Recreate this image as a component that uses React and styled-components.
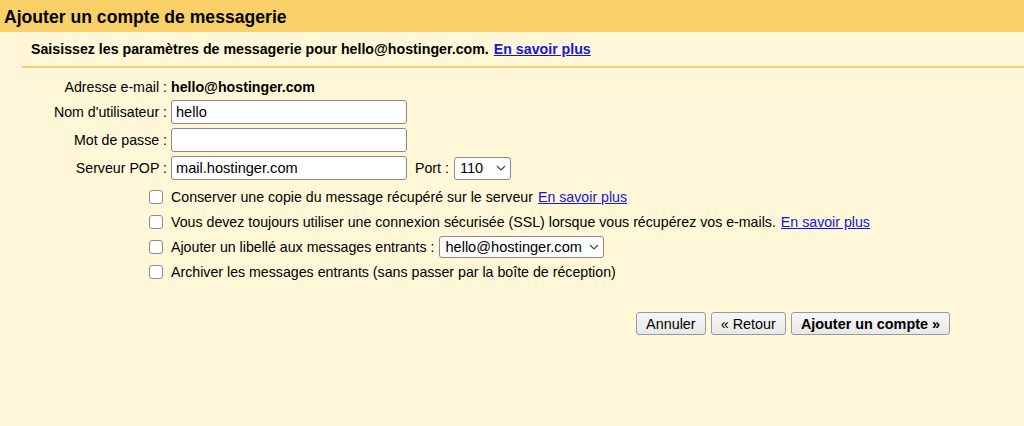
import React from "react";
import styled, { createGlobalStyle } from "styled-components";

const Global = createGlobalStyle`
  html, body { margin: 0; padding: 0; background: #fff7d7; }
  body { font-family: "Liberation Sans", Arial, sans-serif; font-size: 14.2px; color: #000; }
  * { box-sizing: border-box; }
`;

const Page = styled.div`
  width: 1024px;
  height: 426px;
  background: #fff7d7;
  overflow: hidden;
`;

const Header = styled.div`
  height: 32px;
  background: #f9d067;
  display: flex;
  align-items: center;
  padding-left: 4px;
  font-size: 17.6px;
  font-weight: bold;
  padding-top: 3px;
`;

const Intro = styled.div`
  height: 34px;
  display: flex;
  align-items: center;
  padding-left: 31px;
  font-weight: bold;
  gap: 5px;
`;

const Link = styled.a`
  color: #1414e6;
  text-decoration: underline;
  cursor: pointer;
`;

const Rule = styled.div`
  margin-left: 22px;
  height: 2px;
  background: #f9d067;
`;

const FormGrid = styled.div`
  margin-top: 10px;
  display: grid;
  grid-template-columns: 167px auto;
  column-gap: 4px;
  row-gap: 4px;
  align-items: center;
`;

const Label = styled.div`
  text-align: right;
  white-space: nowrap;
`;

const Value = styled.div`
  display: flex;
  align-items: center;
  gap: 8px;
  min-height: ${(p) => (p.$plain ? "18px" : "24px")};
  font-weight: ${(p) => (p.$bold ? "bold" : "normal")};
`;

const TextInput = styled.input`
  width: 236px;
  height: 24px;
  border: 1px solid #8a8a8a;
  border-radius: 3px;
  background: #fff;
  padding: 0 4px;
  font-family: "Liberation Sans", Arial, sans-serif;
  font-size: 14.6px;
  color: #000;
  outline: none;
`;

const SelectWrap = styled.div`
  position: relative;
  display: inline-flex;
  margin-left: ${(p) => p.$ml || 0}px;
`;

const Select = styled.select`
  appearance: none;
  -webkit-appearance: none;
  width: ${(p) => p.$w}px;
  height: ${(p) => p.$h}px;
  border: 1px solid #8a8a8a;
  border-radius: 3px;
  background: #fff;
  padding: 0 0 0 5px;
  font-family: "Liberation Sans", Arial, sans-serif;
  font-size: 14.6px;
  color: #000;
  outline: none;
`;

const Chevron = styled.svg`
  position: absolute;
  right: 5px;
  top: 50%;
  transform: translateY(-50%);
  pointer-events: none;
`;

const Options = styled.div`
  margin-top: 4px;
  display: flex;
  flex-direction: column;
`;

const OptionRow = styled.label`
  height: 25px;
  display: flex;
  align-items: center;
  padding-left: 149px;
  white-space: nowrap;
`;

const Box = styled.span`
  width: 14px;
  height: 14px;
  border: 1px solid #8c8c8c;
  border-radius: 3px;
  background: #fff;
  margin-right: 8px;
  flex-shrink: 0;
`;

const Spacer = styled.span`
  display: inline-block;
  width: 5px;
`;

const Buttons = styled.div`
  margin-top: 28px;
  display: flex;
  justify-content: flex-end;
  gap: 5px;
  padding-right: 74px;
`;

const Button = styled.button`
  height: 23px;
  padding: 0 9px;
  border: 1px solid #999;
  border-radius: 3px;
  background: linear-gradient(#f7f7f7, #e8e8e8);
  font-family: "Liberation Sans", Arial, sans-serif;
  font-size: 14.4px;
  font-weight: ${(p) => (p.$primary ? "bold" : "normal")};
  color: #000;
  cursor: pointer;
`;

const ChevronIcon = () => (
  <Chevron width="10" height="6" viewBox="0 0 10 6">
    <path d="M1 1 L5 5 L9 1" fill="none" stroke="#444" strokeWidth="1.2" />
  </Chevron>
);

export default function App() {
  return (
    <Page>
      <Global />
      <Header>Ajouter un compte de messagerie</Header>
      <Intro>
        <span>Saisissez les paramètres de messagerie pour hello@hostinger.com.</span>
        <Link>En savoir plus</Link>
      </Intro>
      <Rule />
      <FormGrid>
        <Label>Adresse e-mail :</Label>
        <Value $plain $bold>hello@hostinger.com</Value>
        <Label>Nom d'utilisateur :</Label>
        <Value><TextInput defaultValue="hello" /></Value>
        <Label>Mot de passe :</Label>
        <Value><TextInput type="password" /></Value>
        <Label>Serveur POP :</Label>
        <Value>
          <TextInput defaultValue="mail.hostinger.com" />
          <span>Port :</span>
          <SelectWrap $ml={-3}>
            <Select $w={57} $h={23} defaultValue="110">
              <option>110</option>
              <option>995</option>
            </Select>
            <ChevronIcon />
          </SelectWrap>
        </Value>
      </FormGrid>
      <Options>
        <OptionRow>
          <Box />
          Conserver une copie du message récupéré sur le serveur<Spacer />
          <Link>En savoir plus</Link>
        </OptionRow>
        <OptionRow>
          <Box />
          Vous devez toujours utiliser une connexion sécurisée (SSL) lorsque vous récupérez vos e-mails.<Spacer />
          <Link>En savoir plus</Link>
        </OptionRow>
        <OptionRow>
          <Box />
          Ajouter un libellé aux messages entrants :<Spacer />
          <SelectWrap>
            <Select $w={165} $h={22} defaultValue="hello@hostinger.com">
              <option>hello@hostinger.com</option>
            </Select>
            <ChevronIcon />
          </SelectWrap>
        </OptionRow>
        <OptionRow>
          <Box />
          Archiver les messages entrants (sans passer par la boîte de réception)
        </OptionRow>
      </Options>
      <Buttons>
        <Button>Annuler</Button>
        <Button>« Retour</Button>
        <Button $primary>Ajouter un compte »</Button>
      </Buttons>
    </Page>
  );
}
